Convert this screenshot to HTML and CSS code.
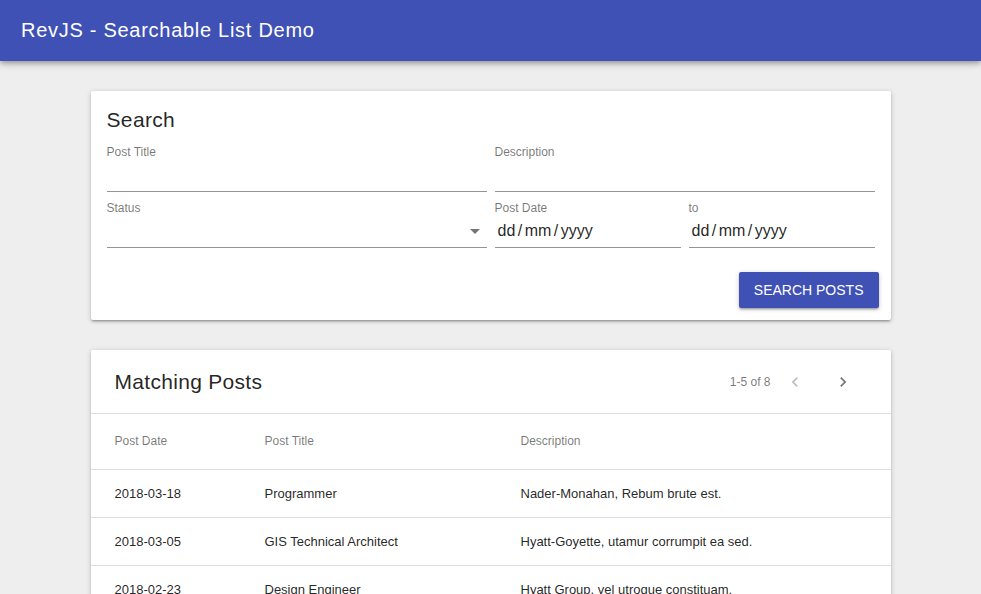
FILE: index.html
```html
<!DOCTYPE html>
<html lang="en">
<head>
<meta charset="utf-8">
<title>RevJS - Searchable List Demo</title>
<link rel="stylesheet" href="styles.css">
</head>
<body>
<header class="appbar">
  <h1 class="appbar-title">RevJS - Searchable List Demo</h1>
</header>
<main class="page">
  <section class="card search-card">
    <h2 class="card-title">Search</h2>
    <div class="form-grid">
      <div class="field span-2">
        <span class="field-label">Post Title</span>
        <div class="field-input"></div>
      </div>
      <div class="field span-2">
        <span class="field-label">Description</span>
        <div class="field-input"></div>
      </div>
      <div class="field span-2">
        <span class="field-label">Status</span>
        <div class="field-input select-input">
          <svg class="select-arrow" viewBox="0 0 24 24" width="24" height="24"><path d="M7 10l5 5 5-5z"/></svg>
        </div>
      </div>
      <div class="field">
        <span class="field-label">Post Date</span>
        <div class="field-input date-input">dd / mm / yyyy</div>
      </div>
      <div class="field">
        <span class="field-label">to</span>
        <div class="field-input date-input">dd / mm / yyyy</div>
      </div>
    </div>
    <div class="card-actions">
      <button class="btn-primary" type="button">Search Posts</button>
    </div>
  </section>

  <section class="card results-card">
    <div class="results-head">
      <h2 class="results-title">Matching Posts</h2>
      <div class="pager">
        <span class="pager-count">1-5 of 8</span>
        <button class="icon-btn is-disabled" type="button" aria-label="Previous page">
          <svg viewBox="0 0 24 24" width="20" height="20"><path d="M15.41 7.41L14 6l-6 6 6 6 1.41-1.41L10.83 12z"/></svg>
        </button>
        <button class="icon-btn" type="button" aria-label="Next page">
          <svg viewBox="0 0 24 24" width="20" height="20"><path d="M10 6L8.59 7.41 13.17 12l-4.58 4.59L10 18l6-6z"/></svg>
        </button>
      </div>
    </div>
    <div class="table">
      <div class="table-row table-header">
        <div class="cell">Post Date</div>
        <div class="cell">Post Title</div>
        <div class="cell">Description</div>
      </div>
      <div class="table-row">
        <div class="cell">2018-03-18</div>
        <div class="cell">Programmer</div>
        <div class="cell">Nader-Monahan, Rebum brute est.</div>
      </div>
      <div class="table-row">
        <div class="cell">2018-03-05</div>
        <div class="cell">GIS Technical Architect</div>
        <div class="cell">Hyatt-Goyette, utamur corrumpit ea sed.</div>
      </div>
      <div class="table-row">
        <div class="cell">2018-02-23</div>
        <div class="cell">Design Engineer</div>
        <div class="cell">Hyatt Group, vel utroque constituam.</div>
      </div>
      <div class="table-row">
        <div class="cell">2018-02-11</div>
        <div class="cell">Systems Analyst</div>
        <div class="cell">Kuhn LLC, nec ut fierent.</div>
      </div>
      <div class="table-row">
        <div class="cell">2018-01-29</div>
        <div class="cell">Web Developer</div>
        <div class="cell">Lind Inc, duo an mundi.</div>
      </div>
    </div>
  </section>
</main>
</body>
</html>
```

FILE: styles.css
```css
* { box-sizing: border-box; }

html, body {
  margin: 0;
  padding: 0;
  overflow: hidden;
}

body {
  background: #eeeeee;
  font-family: "Liberation Sans", Arial, Helvetica, sans-serif;
  color: rgba(0, 0, 0, 0.87);
}

.appbar {
  height: 61px;
  background: #3f51b5;
  display: flex;
  align-items: center;
  padding: 0 21px 1px;
  box-shadow: 0 2px 4px -1px rgba(0,0,0,0.2), 0 4px 5px 0 rgba(0,0,0,0.14), 0 1px 10px 0 rgba(0,0,0,0.12);
  position: relative;
  z-index: 1;
}

.appbar-title {
  margin: 0;
  font-size: 20px;
  font-weight: 400;
  letter-spacing: 0.72px;
  color: #ffffff;
  line-height: 1;
}

.page {
  max-width: 800px;
  margin: 0 auto;
  padding: 30px 0;
  display: flex;
  flex-direction: column;
  gap: 30px;
}

.card {
  background: #ffffff;
  border-radius: 2px;
  box-shadow: 0 1px 5px 0 rgba(0,0,0,0.2), 0 2px 2px 0 rgba(0,0,0,0.14), 0 3px 1px -2px rgba(0,0,0,0.12);
}

.search-card {
  padding: 16px 16px 0;
}

.card-title {
  margin: 0;
  font-size: 21px;
  font-weight: 400;
  letter-spacing: 0.35px;
  line-height: 26px;
}

.form-grid {
  margin-top: 12px;
  display: grid;
  grid-template-columns: repeat(4, 1fr);
  column-gap: 8px;
  row-gap: 9px;
}

.span-2 { grid-column: span 2; }

.field {
  display: flex;
  flex-direction: column;
}

.field-label {
  font-size: 12px;
  line-height: 14px;
  color: rgba(0, 0, 0, 0.54);
}

.field-input {
  height: 33px;
  border-bottom: 1px solid #949494;
  position: relative;
  font-size: 16px;
  line-height: 32px;
  color: rgba(0, 0, 0, 0.87);
}

.date-input {
  padding-left: 3px;
  word-spacing: -2px;
}

.select-arrow {
  position: absolute;
  right: 0;
  top: 4px;
  fill: rgba(0, 0, 0, 0.54);
}

.card-actions {
  display: flex;
  justify-content: flex-end;
  padding: 24px 0 12px;
  margin-right: -4px;
}

.btn-primary {
  height: 36px;
  min-width: 88px;
  padding: 0 15px;
  border: 0;
  border-radius: 2px;
  background: #3f51b5;
  color: #ffffff;
  font-family: inherit;
  font-size: 14px;
  text-transform: uppercase;
  box-shadow: 0 1px 5px 0 rgba(0,0,0,0.2), 0 2px 2px 0 rgba(0,0,0,0.14), 0 3px 1px -2px rgba(0,0,0,0.12);
  cursor: pointer;
}

.results-head {
  height: 64px;
  display: flex;
  align-items: center;
  justify-content: space-between;
  padding: 0 24px;
  border-bottom: 1px solid #e0e0e0;
}

.results-title {
  margin: 0;
  font-size: 21px;
  font-weight: 400;
  letter-spacing: 0.3px;
  line-height: 27px;
}

.pager {
  display: flex;
  align-items: center;
}

.pager-count {
  font-size: 12px;
  color: rgba(0, 0, 0, 0.54);
  margin-right: 0;
}

.icon-btn {
  width: 48px;
  height: 48px;
  padding: 0;
  border: 0;
  background: transparent;
  display: flex;
  align-items: center;
  justify-content: center;
  fill: rgba(0, 0, 0, 0.54);
  cursor: pointer;
}

.icon-btn.is-disabled {
  fill: rgba(0, 0, 0, 0.26);
  cursor: default;
}

.table-row {
  display: grid;
  grid-template-columns: 150px 256px 1fr;
  height: 48px;
  align-items: center;
  border-bottom: 1px solid #e0e0e0;
  font-size: 13px;
  color: rgba(0, 0, 0, 0.87);
}

.table-header {
  height: 56px;
  font-size: 12px;
  color: rgba(0, 0, 0, 0.54);
  padding-bottom: 1px;
}

.cell {
  padding: 0 24px;
  white-space: nowrap;
}
```
